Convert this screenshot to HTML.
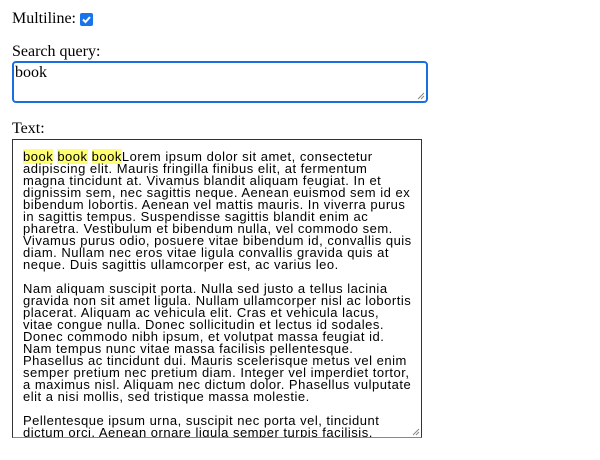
<!DOCTYPE html>
<html><head><style>
body{margin:0;width:600px;height:460px;overflow:hidden;background:#fff;font-family:"Liberation Serif",serif;font-size:16px;color:#000;position:relative}
.a{position:absolute;left:12px;white-space:nowrap}
.cb{position:absolute;left:80px;top:13px;width:13px;height:13px;background:#1a73e8;border-radius:2px}
.ta{position:absolute;left:12px;top:61px;width:412px;height:38px;border:2px solid #1a6ee0;border-radius:4px;box-sizing:content-box}
.txt{position:absolute;left:12px;top:139px;width:408px;height:297px;border:1px solid #333;border-bottom-color:#888;overflow:hidden;font-family:"Liberation Sans",sans-serif;font-size:13px;line-height:12px;padding:0}
.in{position:absolute;left:10px;top:11px;white-space:pre;letter-spacing:0.5px}
mark{background:#ffff70;color:#000}
.grip{position:absolute;right:1px;bottom:1px}
</style></head><body>
<div class="a" style="top:10px">Multiline:</div>
<div class="cb"><svg width="13" height="13" viewBox="0 0 13 13"><path d="M3 6.5l2.5 2.5 4.5-5" stroke="#fff" stroke-width="2" fill="none"/></svg></div>
<div class="a" style="top:43px">Search query:</div>
<div class="ta"><div style="position:absolute;left:1px;top:1px">book</div>
<svg class="grip" width="8" height="8" viewBox="0 0 8 8"><path d="M7 1L1 7M7 4L4 7" stroke="#888" stroke-width="1"/></svg></div>
<div class="a" style="top:120px">Text:</div>
<div class="txt"><div class="in"><mark>book</mark> <mark>book</mark> <mark>book</mark>Lorem ipsum dolor sit amet, consectetur
adipiscing elit. Mauris fringilla finibus elit, at fermentum
magna tincidunt at. Vivamus blandit aliquam feugiat. In et
dignissim sem, nec sagittis neque. Aenean euismod sem id ex
bibendum lobortis. Aenean vel mattis mauris. In viverra purus
in sagittis tempus. Suspendisse sagittis blandit enim ac
pharetra. Vestibulum et bibendum nulla, vel commodo sem.
Vivamus purus odio, posuere vitae bibendum id, convallis quis
diam. Nullam nec eros vitae ligula convallis gravida quis at
neque. Duis sagittis ullamcorper est, ac varius leo.

Nam aliquam suscipit porta. Nulla sed justo a tellus lacinia
gravida non sit amet ligula. Nullam ullamcorper nisl ac lobortis
placerat. Aliquam ac vehicula elit. Cras et vehicula lacus,
vitae congue nulla. Donec sollicitudin et lectus id sodales.
Donec commodo nibh ipsum, et volutpat massa feugiat id.
Nam tempus nunc vitae massa facilisis pellentesque.
Phasellus ac tincidunt dui. Mauris scelerisque metus vel enim
semper pretium nec pretium diam. Integer vel imperdiet tortor,
a maximus nisl. Aliquam nec dictum dolor. Phasellus vulputate
elit a nisi mollis, sed tristique massa molestie.

Pellentesque ipsum urna, suscipit nec porta vel, tincidunt
dictum orci. Aenean ornare ligula semper turpis facilisis,</div>
<svg class="grip" width="8" height="8" viewBox="0 0 8 8"><path d="M7 1L1 7M7 4L4 7" stroke="#888" stroke-width="1"/></svg></div>
</body></html>
